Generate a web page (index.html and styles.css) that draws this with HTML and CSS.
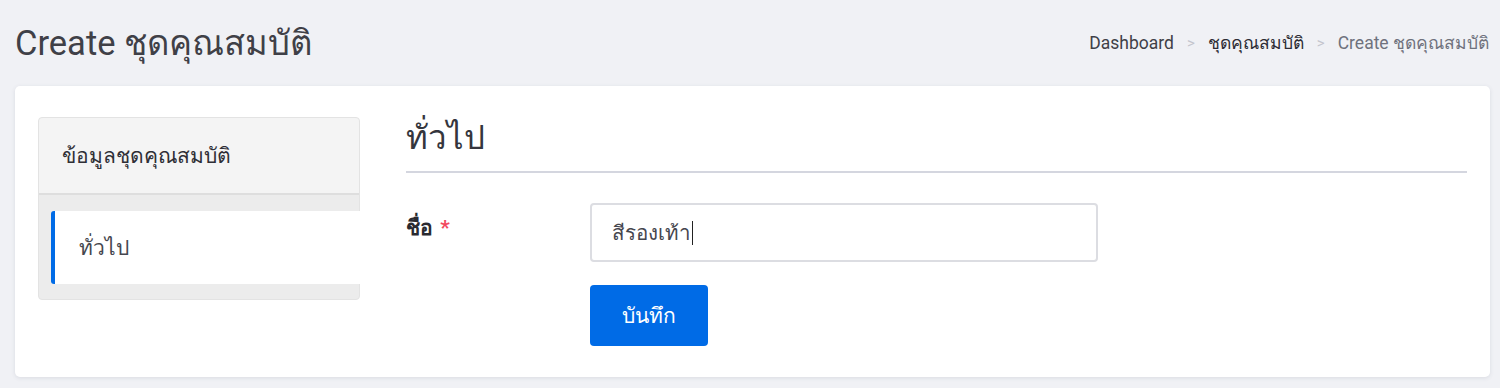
FILE: index.html
```html
<!DOCTYPE html>
<html lang="th">
<head>
<meta charset="utf-8">
<title>Create ชุดคุณสมบัติ</title>
<link rel="stylesheet" href="styles.css">
</head>
<body>
<header class="page-head">
  <h1 class="page-title">Create ชุดคุณสมบัติ</h1>
  <nav class="crumbs">
    <a class="crumb">Dashboard</a>
    <span class="sep">&gt;</span>
    <a class="crumb crumb-strong">ชุดคุณสมบัติ</a>
    <span class="sep">&gt;</span>
    <span class="crumb crumb-current">Create ชุดคุณสมบัติ</span>
  </nav>
</header>
<main class="card">
  <aside class="side">
    <div class="side-head">ข้อมูลชุดคุณสมบัติ</div>
    <div class="side-body">
      <div class="side-item">ทั่วไป</div>
    </div>
  </aside>
  <section class="content">
    <h2 class="section-title">ทั่วไป</h2>
    <div class="form-row">
      <label class="label">ชื่อ <span class="req">*</span></label>
      <div class="field">
        <div class="input">สีรองเท้า<span class="caret"></span></div>
        <button class="btn">บันทึก</button>
      </div>
    </div>
  </section>
</main>
</body>
</html>
```

FILE: styles.css
```css
* { box-sizing: border-box; }
html, body { margin: 0; padding: 0; }
body {
  background: #f0f1f5;
  font-family: Roboto, "Noto Sans", "DejaVu Sans", sans-serif;
  color: #3f4047;
  font-size: 17.5px;
  width: 1500px;
  height: 388px;
  overflow: hidden;
}
.page-head {
  height: 86px;
  display: flex;
  align-items: center;
  justify-content: space-between;
  padding: 0 11px 0 15px;
}
.page-title {
  margin: 0;
  font-size: 34.5px;
  font-weight: 400;
  color: #3f4047;
  line-height: 1;
}
.crumbs {
  display: flex;
  align-items: center;
  font-size: 17.5px;
}
.crumb { color: #3f4047; text-decoration: none; }
.crumb-strong { color: #2c2c34; }
.crumb-current { color: #6f727d; }
.sep { color: #c4c5cd; font-size: 15px; margin: 0 13px; }
.card {
  margin: 0 10px 0 15px;
  height: 291px;
  background: #fff;
  border-radius: 5px;
  box-shadow: 0 1px 4px rgba(60, 64, 90, 0.12);
  display: flex;
  padding: 31px 23px 0 23px;
  gap: 46px;
}
.side {
  width: 322px;
  flex: none;
  align-self: flex-start;
  border: 1px solid #e3e3e3;
  border-radius: 4px;
  background: #ececec;
}
.side-head {
  height: 77px;
  display: flex;
  align-items: center;
  padding-left: 23px;
  font-size: 21px;
  color: #2f2f36;
  background: #f4f4f4;
  border-bottom: 2px solid #dedede;
  border-radius: 4px 4px 0 0;
}
.side-body {
  padding: 16px 0 15px 12px;
}
.side-item {
  height: 73px;
  margin-right: -1px;
  background: #fff;
  border-left: 4px solid #006be6;
  border-radius: 3px 0 0 3px;
  display: flex;
  align-items: center;
  padding-left: 24px;
  font-size: 21px;
  color: #46474f;
}
.content { flex: 1; }
.section-title {
  margin: 0;
  height: 56px;
  font-size: 33px;
  font-weight: 400;
  color: #35363d;
  border-bottom: 2px solid #d4d6df;
  line-height: 42px;
}
.form-row {
  display: flex;
  padding-top: 30px;
}
.label {
  width: 184px;
  flex: none;
  font-size: 21px;
  font-weight: 700;
  color: #2a2a30;
  padding-top: 8px;
}
.req { color: #f2495e; margin-left: 2px; }
.field { display: flex; flex-direction: column; align-items: flex-start; }
.input {
  width: 508px;
  height: 59px;
  border: 2px solid #dcdde2;
  border-radius: 4px;
  display: flex;
  align-items: center;
  padding-left: 20px;
  font-size: 20.5px;
  color: #45464e;
}
.caret {
  display: inline-block;
  width: 1px;
  height: 24px;
  background: #222;
  margin-left: 1px;
}
.btn {
  margin-top: 23px;
  width: 118px;
  height: 61px;
  border: none;
  border-radius: 4px;
  background: #006be6;
  color: #fff;
  font-family: inherit;
  font-size: 21px;
  font-weight: 500;
}
```
